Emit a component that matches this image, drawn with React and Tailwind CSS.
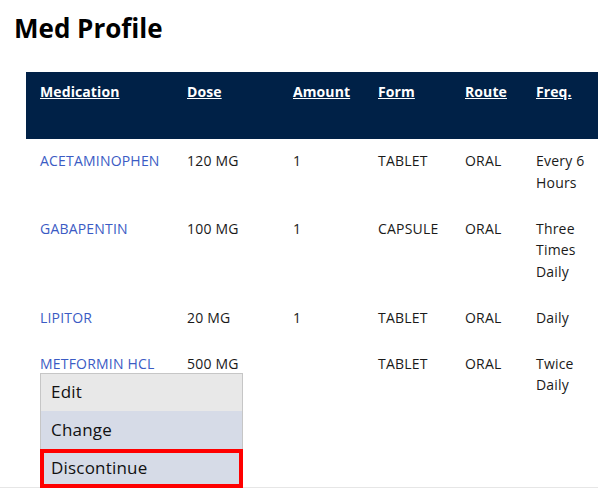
import React from "react";

const meds = [
  { name: "ACETAMINOPHEN", dose: "120 MG", amount: "1", form: "TABLET", route: "ORAL", freq: "Every 6 Hours" },
  { name: "GABAPENTIN", dose: "100 MG", amount: "1", form: "CAPSULE", route: "ORAL", freq: "Three Times Daily" },
  { name: "LIPITOR", dose: "20 MG", amount: "1", form: "TABLET", route: "ORAL", freq: "Daily" },
  { name: "METFORMIN HCL", dose: "500 MG", amount: "", form: "TABLET", route: "ORAL", freq: "Twice Daily", menu: true },
];

const headers = ["Medication", "Dose", "Amount", "Form", "Route", "Freq."];
const widths = ["w-[147px]", "w-[106px]", "w-[85px]", "w-[87px]", "w-[71px]", "w-[76px]"];

function ActionMenu() {
  return (
    <div className="absolute left-[14px] top-[31px] z-10 w-[203px] text-[17px] leading-[24px] tracking-[0.2px] text-[#111]">
      <div className="flex h-[38px] items-center border-x border-t border-[#c6c6c6] bg-[#e8e8e8] px-[10px]">Edit</div>
      <div className="flex h-[38px] items-center border-x border-[#c6c6c6] bg-[#d6dbe7] px-[10px]">Change</div>
      <div className="flex h-[39px] items-center border-4 border-[#ff0000] bg-[#d6dbe7] px-[7px]">Discontinue</div>
    </div>
  );
}

export default function App() {
  return (
    <div
      className="relative h-[488px] overflow-hidden bg-white text-[14px] leading-[21.75px] tracking-[0.2px] text-[#1a1a1a]"
      style={{ fontFamily: '"Open Sans", "Noto Sans", sans-serif' }}
    >
      <h1 className="pl-[14px] pt-[9.5px] text-[26px] font-bold leading-[36px] tracking-normal text-black">Med Profile</h1>

      <table className="ml-[26px] mt-[26.5px] w-[572px] table-fixed border-collapse">
        <thead>
          <tr className="h-[67px] bg-[#002147]">
            {headers.map((h, i) => (
              <th key={h} className={`${widths[i]} pl-[14px] pt-[9px] text-left align-top font-bold tracking-[0.1px] text-white underline`}>
                {h}
              </th>
            ))}
          </tr>
        </thead>
        <tbody>
          {meds.map((m) => (
            <tr key={m.name} className="align-top">
              <td className="relative pl-[14px] pt-[11px] pb-[13px] text-[#3b5bc4]">
                {m.name}
                {m.menu && <ActionMenu />}
              </td>
              <td className="pl-[14px] pt-[11px] pb-[13px]">{m.dose}</td>
              <td className="pl-[14px] pt-[11px] pb-[13px]">{m.amount}</td>
              <td className="pl-[14px] pt-[11px] pb-[13px]">{m.form}</td>
              <td className="pl-[14px] pt-[11px] pb-[13px]">{m.route}</td>
              <td className="pl-[14px] pr-[2px] pt-[11px] pb-[13px]">{m.freq}</td>
            </tr>
          ))}
        </tbody>
      </table>

      <div className="absolute bottom-0 left-0 h-px w-full bg-[#e6e6e6]" />
    </div>
  );
}
